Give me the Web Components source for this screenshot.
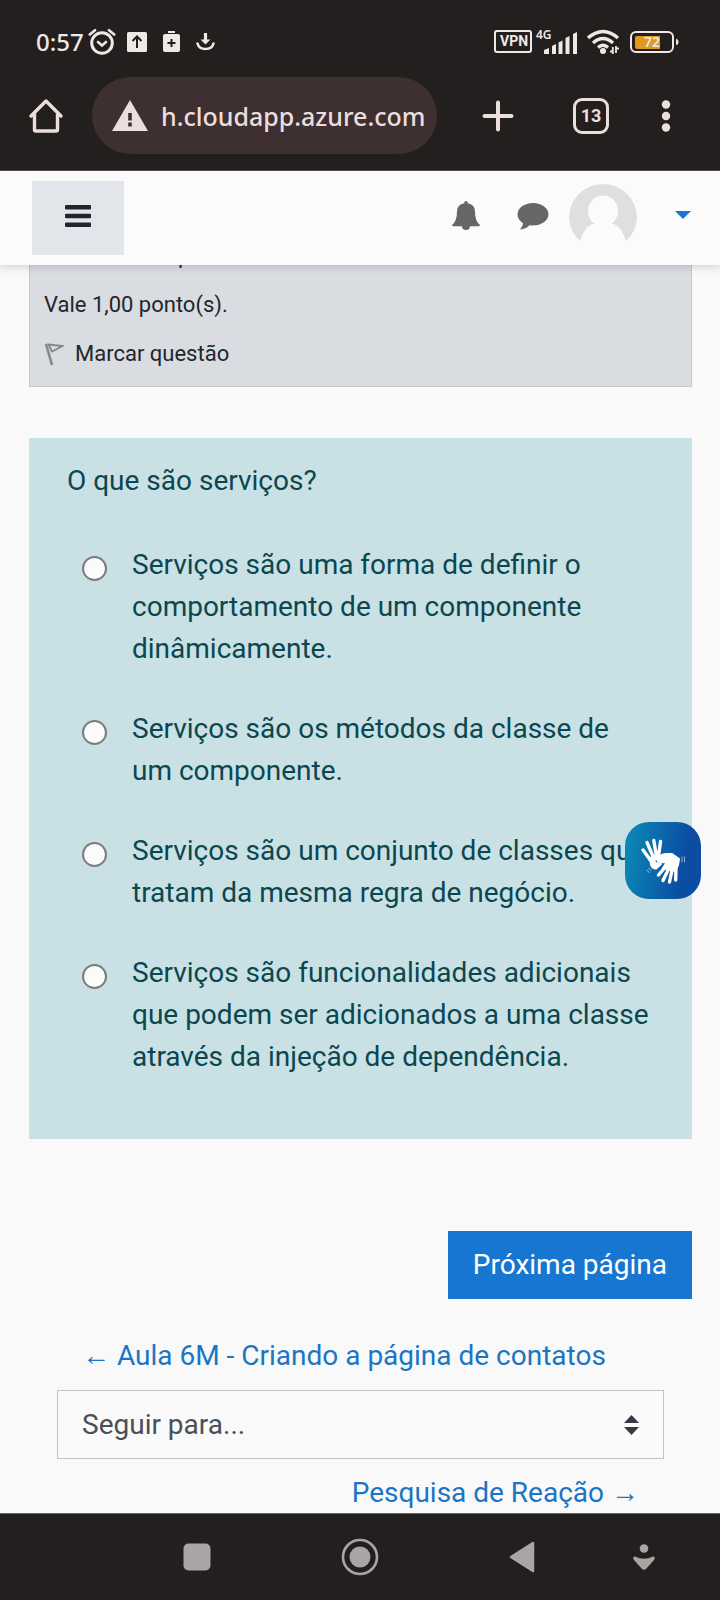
<!DOCTYPE html>
<html lang="pt-BR">
<head>
<meta charset="utf-8">
<meta name="viewport" content="width=device-width, initial-scale=1">
<title>Questionário</title>
<style>
html{height:100%}
body{margin:0;min-height:100%;background:#f9f9f9;font-family:Roboto,"Liberation Sans",sans-serif;color:#22262b}
</style>
</head>
<body>
<phone-screen>
  <status-bar slot="top"></status-bar>
  <browser-bar slot="top" tabs="13">h.cloudapp.azure.com</browser-bar>
  <site-nav slot="top"></site-nav>
  <question-info>
    <span slot="state">Ainda não respondida</span>
    <span slot="grade">Vale 1,00 ponto(s).</span>
    <span slot="flag">Marcar questão</span>
  </question-info>
  <question-card>
    <span slot="question">O que são serviços?</span>
    <answer-option>Serviços são uma forma de definir o comportamento de um componente dinâmicamente.</answer-option>
    <answer-option>Serviços são os métodos da classe de um componente.</answer-option>
    <answer-option>Serviços são um conjunto de classes que tratam da mesma regra de negócio.</answer-option>
    <answer-option>Serviços são funcionalidades adicionais que podem ser adicionados a uma classe através da injeção de dependência.</answer-option>
  </question-card>
  <next-button>Próxima página</next-button>
  <activity-nav></activity-nav>
  <sign-widget slot="overlay"></sign-widget>
  <system-nav slot="bottom"></system-nav>
</phone-screen>

<script>
function define(name, html, setup) {
  const tpl = document.createElement('template');
  tpl.innerHTML = '<style>:host,*{box-sizing:border-box}svg{display:block;flex:none}button,a{font:inherit;color:inherit}</style>' + html;
  customElements.define(name, class extends HTMLElement {
    constructor() {
      super();
      this.attachShadow({ mode: 'open' }).append(tpl.content.cloneNode(true));
    }
    connectedCallback() { if (setup) setup(this, this.shadowRoot); }
  });
}

define('phone-screen', `
<style>
:host{display:flex;flex-direction:column;min-height:100vh;position:relative}
main{flex:1;padding:0 28px 0 29px}
</style>
<slot name="top"></slot>
<main><slot></slot></main>
<slot name="overlay"></slot>
<slot name="bottom"></slot>`);

define('status-bar', `
<style>
:host{display:flex;align-items:center;height:77px;padding:6px 41px 0 36px;background:#231f1e;color:#eee8e7;font-family:"Noto Sans",sans-serif}
.side{display:flex;align-items:center}
.right{margin-left:auto}
.time{font-size:24px;line-height:28px;font-weight:500;margin-right:4px}
.vpn{font:700 14px/19px Roboto,sans-serif;border:2px solid;border-radius:3px;padding:0 4px;height:23px;width:38px;text-align:center}
.cell{position:relative;width:42px;height:26px;margin:0 9px 0 4px}
.cell span{position:absolute;left:0;top:0;font-size:12px;line-height:12px;font-weight:600}
.cell svg{position:absolute;right:0;bottom:1px}
.batt{display:grid;margin-left:10px;align-items:center}
.batt>*{grid-area:1/1}
.batt span{font-size:14px;line-height:22px;font-weight:600;padding-left:14px}
</style>
<div class="side">
  <span class="time">0:57</span>
  <svg width="28" height="28" viewBox="0 0 28 28" fill="none" stroke="currentColor" stroke-width="3" stroke-linecap="round"><circle cx="14" cy="15" r="10.3"/><path d="M10 14l4 3.500 4-3.500M1.800 6.500L7 2.200M26.200 6.500L21 2.200" stroke-width="2.600"/></svg>
  <svg style="margin-left:11px" width="20" height="20" viewBox="0 0 20 20"><rect width="20" height="20" rx="1.500" fill="currentColor"/><path d="M10 16V5M5.500 9L10 4.500 14.500 9" fill="none" stroke="#231f1e" stroke-width="2"/></svg>
  <svg style="margin-left:16px" width="17" height="21" viewBox="0 0 17 21"><path d="M5 0h7v2H5z" fill="currentColor"/><rect y="3" width="17" height="18" rx="2" fill="currentColor"/><path d="M8.500 8v8M4.500 12h8" stroke="#231f1e" stroke-width="2"/></svg>
  <svg style="margin-left:16px" width="19" height="20" viewBox="0 0 19 20"><path d="M9.500 1v8" stroke="currentColor" stroke-width="3.200"/><path d="M4.500 7.500h10l-5 5z" fill="currentColor"/><path d="M1.500 11.500Q3 17 9.500 17T17.500 11.500" fill="none" stroke="currentColor" stroke-width="2.600" stroke-linecap="round"/></svg>
</div>
<div class="side right">
  <span class="vpn">VPN</span>
  <div class="cell"><span>4G</span>
    <svg width="34" height="22" viewBox="0 0 34 22" fill="currentColor"><path d="M0 18l5-2v6H0zM8 14l4-2v10H8zM14.500 10.500l4-2V22h-4zM21.500 6l4-2v18h-4zM29 2l4-2v22h-4z"/></svg></div>
  <svg width="33" height="26" viewBox="0 0 33 26" fill="none" stroke="currentColor" stroke-width="3.400"><path d="M1 9Q16 -4 31 9M6 14Q16 5 26 14M11 18.500Q16 14 21 18.500"/><circle cx="16" cy="22" r="2.300" fill="currentColor" stroke-width="1.500"/><path d="M25.800 18v7M29 17v7M23 22.500h3M29 19.500h3" stroke-width="1.800"/></svg>
  <div class="batt">
    <svg width="49" height="22" viewBox="0 0 49 22"><rect x="1" y="1" width="42" height="20" rx="5" fill="none" stroke="currentColor" stroke-width="2"/><path d="M7 5h23v13H7Q5 18 5 16V7Q5 5 7 5z" fill="#e09a1e"/><path d="M46 8q2.500 0 2.500 3T46 14z" fill="currentColor"/></svg>
    <span>72</span>
  </div>
</div>`);

define('browser-bar', `
<style>
:host{display:flex;align-items:center;height:94px;padding:0 49px 16px 28px;background:#231f1e;color:#ecdedd;border-bottom:1px solid #5c4b4b}
button{display:grid;place-items:center;background:none;border:0;padding:0}
.pill{display:flex;align-items:center;flex:1;min-width:0;height:77px;border-radius:39px;background:#3e3031;margin:0 45px 0 28px;padding-left:20px;gap:13px}
.url{font:500 25px/34px "Noto Sans",sans-serif;white-space:nowrap}
.tabs{width:36px;height:36px;border:3px solid #ecdedd;border-radius:9px;font:700 18px/28px Roboto,sans-serif;margin:0 52px 0 59px}
</style>
<button aria-label="Início"><svg width="36" height="36" viewBox="0 0 36 36" fill="none" stroke="currentColor" stroke-width="3.400" stroke-linejoin="round" stroke-linecap="round"><path d="M3 18L18 3l15 15M6.500 16v15.500q0 1.500 1.500 1.500h20q1.500 0 1.500-1.500V16"/></svg></button>
<div class="pill">
  <svg width="36" height="31" viewBox="0 0 36 31"><path d="M18 0l18 31H0z" fill="currentColor"/><path d="M18 13v7.500M18 22.500v4" stroke="#3e3031" stroke-width="3.600"/></svg>
  <span class="url"><slot></slot></span>
</div>
<button aria-label="Nova guia"><svg width="32" height="32" viewBox="0 0 32 32" stroke="currentColor" stroke-width="4" stroke-linecap="round"><path d="M16 2.500v27M2.500 16h27"/></svg></button>
<button class="tabs" aria-label="Guias"></button>
<button aria-label="Mais"><svg width="10" height="32" viewBox="0 0 10 32" fill="currentColor"><circle cx="5" cy="4.500" r="4.200"/><circle cx="5" cy="16" r="4.200"/><circle cx="5" cy="27.500" r="4.200"/></svg></button>`,
(host, root) => { root.querySelector('.tabs').textContent = host.getAttribute('tabs'); });

define('site-nav', `
<style>
:host{display:flex;align-items:center;height:94px;padding:0 29px 0 32px;background:#fbfbfb;box-shadow:0 2px 8px rgba(0,0,0,.16);position:relative;z-index:1;color:#666}
button{border:0;padding:0;background:none;display:grid;place-items:center}
.menu{width:92px;height:74px;background:#e2e6ea;color:#20262c;margin-right:auto}
.menu,.icon{padding-bottom:5px}
.chat{margin:0 20px 0 37px}
.caret{margin-left:38px}
</style>
<button class="menu" aria-label="Menu"><svg width="26" height="22" viewBox="0 0 26 22" fill="currentColor"><rect width="26" height="4.500" rx="1"/><rect y="8.700" width="26" height="4.500" rx="1"/><rect y="17.500" width="26" height="4.500" rx="1"/></svg></button>
<button class="icon" aria-label="Notificações"><svg width="28" height="30" viewBox="0 0 28 32" preserveAspectRatio="none" fill="currentColor"><path d="M14 0q1.800 0 1.800 2.400Q23 4 23 11q0 11 5 14.500 0 1.500-1.500 1.500h-25Q0 27 0 25.500 5 22 5 11 5 4 12.200 2.400 12.200 0 14 0zM10 27h8q0 4-4 4t-4-4z"/></svg></button>
<button class="icon chat" aria-label="Mensagens"><svg width="32" height="28" viewBox="0 0 32 28" fill="currentColor"><path d="M16 1c8.500 0 15.500 5 15.500 11.200S24.500 23.500 16 23.500l-3.500-.2Q9 27 3 27.500q3-3 3-6.200Q.5 17.500.5 12.200C.5 6 7.500 1 16 1z"/></svg></button>
<button aria-label="Perfil"><svg width="68" height="68" viewBox="0 0 68 68"><path d="M11 57a34 34 0 0 1-11-23a34 34 0 0 1 68 0a34 34 0 0 1-11 23Q53 44 45 40H23Q15 44 11 57z" fill="#dfdfdf"/><ellipse cx="34" cy="27" rx="15" ry="15.500" fill="#fbfbfb"/></svg></button>
<button class="icon caret" aria-label="Abrir menu do usuário"><svg width="16" height="16" viewBox="0 0 16 16" fill="#1776d0"><path d="M0 3h16l-8 8z"/></svg></button>`);

/* the card starts above the page's scroll edge, so its first line lies behind the site bar */
define('question-info', `
<style>
:host{display:flex;flex-direction:column;gap:17px;margin-top:-41px;padding:16px 14px;border:1px solid #c3c7cd;border-top:0;background:#d9dce1;font-size:22px;line-height:32px}
.flag{display:flex;align-items:center;gap:11px}
</style>
<div><slot name="state"></slot></div>
<div><slot name="grade"></slot></div>
<div class="flag"><svg width="20" height="23" viewBox="0 0 20 23" fill="none" stroke="#85878b"><path d="M2 1l6 21" stroke-width="2.600"/><path d="M4.500 1.500l14 1.500L8 8.500z" stroke-width="1.800"/></svg><slot name="flag"></slot></div>`);

define('question-card', `
<style>
:host{display:block;margin-top:51px;padding:22px 38px 61px;background:#c9e0e5;color:#0b474f;font-size:28px;line-height:42px}
.list{display:flex;flex-direction:column;gap:38px;margin-top:42px}
</style>
<div><slot name="question"></slot></div>
<div class="list" role="radiogroup"><slot></slot></div>`);

define('answer-option', `
<style>
:host{display:block}
label{display:grid;grid-template-columns:25px 1fr;column-gap:25px;padding-left:15px}
input{appearance:none;width:25px;height:25px;margin:12px 0 0;border:2px solid #7c7c7c;border-radius:50%;background:#fbfbfb}
</style>
<label><input type="radio" name="answer"><span><slot></slot></span></label>`);

define('next-button', `
<style>
:host{display:flex;justify-content:flex-end;margin-top:92px}
button{border:0;height:68px;padding:0 25px;background:#1776d0;color:#fff;font-size:28px;line-height:42px}
</style>
<button><slot></slot></button>`);

define('activity-nav', `
<style>
:host{display:block;padding:0 28px;margin-top:37px;font-size:28px;line-height:40px}
a{display:block;color:#1a75c4;text-decoration:none;padding:0 25px}
.next{text-align:right;margin-top:14px}
.select{display:grid;align-items:center;margin-top:14px}
.select>*{grid-area:1/1}
select{appearance:none;width:100%;height:69px;border:1px solid #c0c2c7;border-radius:0;background:#fafafa;color:#495057;font:inherit;padding:0 24px}
svg{justify-self:end;margin-right:25px;pointer-events:none}
</style>
<a href="#aula">← Aula 6M - Criando a página de contatos</a>
<div class="select">
  <select aria-label="Seguir para"><option>Seguir para...</option></select>
  <svg width="15" height="20" viewBox="0 0 15 20" fill="#343a40"><path d="M0 8h15L7.500 0zM0 12h15l-7.500 8z"/></svg>
</div>
<a class="next" href="#pesquisa">Pesquisa de Reação →</a>`);

define('sign-widget', `
<style>
:host{position:absolute;right:19px;top:822px;z-index:2}
button{display:block;border:0;padding:0;width:76px;height:77px;border-radius:24px;background:linear-gradient(100deg,#0a86b5 8%,#0a4da2 75%)}
</style>
<button aria-label="Acessível em Libras"><svg width="76" height="77" viewBox="0 0 76 77" fill="#fff" stroke="#fff" stroke-linecap="round" stroke-linejoin="round">
<path d="M18 28l8 11M22 20.500l6.500 15M28.800 18.500l2.700 16M35.500 19.500l-2 15" stroke-width="3.400" fill="none"/>
<path d="M25 36l9-3 .5 2.500-5 2.500.5 3 6 1-5 4.500q-4 0-5-4z" stroke-width="2"/>
<path d="M32 36.500q4-4.500 10-4.500h5l7 5-1 6-3 6-12-3 4-6q-5 .5-9-.5z" stroke-width="2"/>
<path d="M42 43l-8.500 10M44 46l-6 12.500M47.500 46l-3 14M51 44l-.3 14" stroke-width="3.400" fill="none"/>
<path d="M57 35v5M59.500 35v5M21.500 48l3 2.500M23.500 46.500l2.500 2" stroke-width="1" opacity=".55"/>
</svg></button>`);

define('system-nav', `
<style>
:host{display:flex;align-items:center;height:87px;padding:0 64px 0 183px;background:#231f1e;border-top:1px solid #6a6160;color:#a9a5a4}
button{border:0;background:none;padding:0;margin-right:130px}
button:last-child{margin:0 0 0 auto}
button:nth-last-child(2){margin-right:0}
</style>
<button aria-label="Recentes"><svg width="28" height="28" viewBox="0 0 28 28"><rect x=".5" y=".5" width="27" height="27" rx="5" fill="currentColor"/></svg></button>
<button aria-label="Início"><svg width="38" height="38" viewBox="0 0 38 38"><circle cx="19" cy="19" r="17" fill="none" stroke="currentColor" stroke-width="2.600"/><circle cx="19" cy="19" r="10.500" fill="currentColor"/></svg></button>
<button aria-label="Voltar"><svg width="26" height="32" viewBox="0 0 26 32"><path d="M24 2v28L2 16z" fill="currentColor" stroke="currentColor" stroke-width="2.500" stroke-linejoin="round"/></svg></button>
<button aria-label="Ocultar"><svg width="24" height="26" viewBox="0 0 24 26" fill="currentColor"><circle cx="12" cy="4.500" r="4.300"/><path d="M3 12.500q9 4.500 18 0 3 .5 1 3.500l-8 9q-2 1.500-4 0L2 16q-2-3 1-3.500z"/></svg></button>`);
</script>
</body>
</html>
